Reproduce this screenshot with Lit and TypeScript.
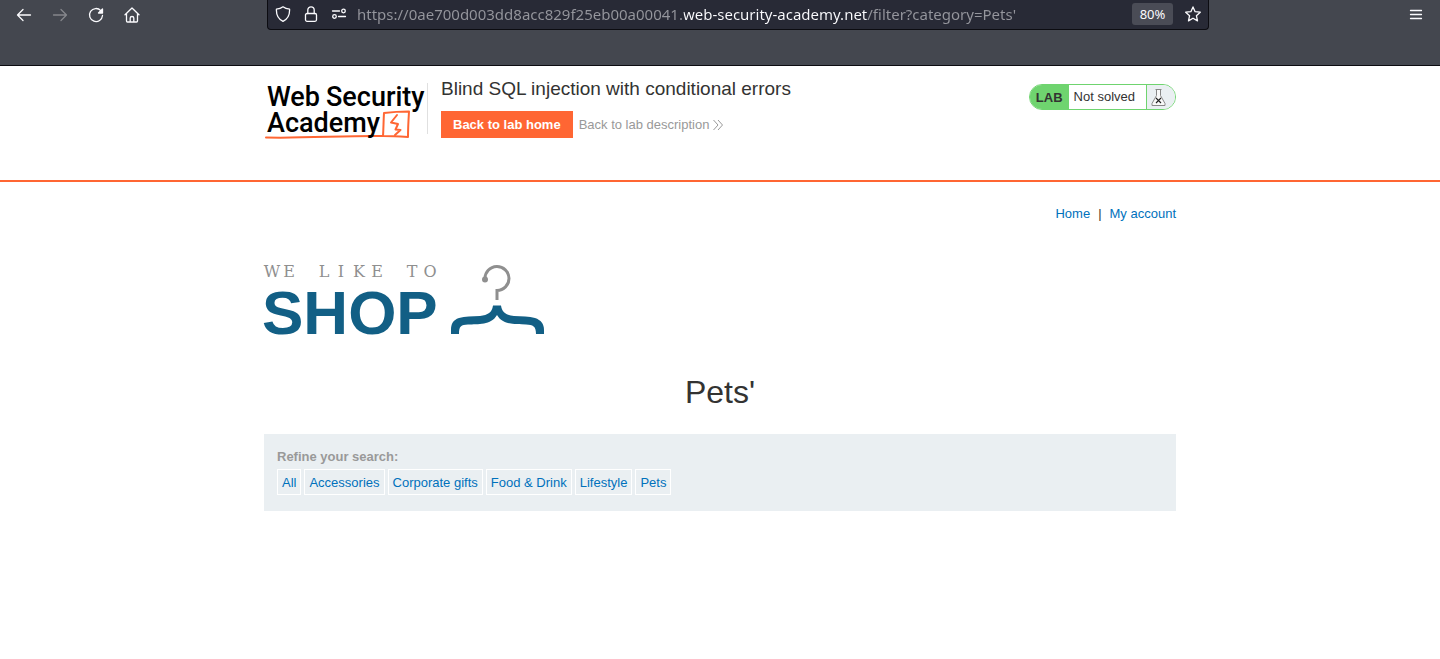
import { LitElement, html, css } from "lit";
import { customElement, property } from "lit/decorators.js";

@customElement("browser-bar")
class BrowserBar extends LitElement {
  @property() url = "";

  static styles = css`
    :host {
      display: block;
      box-sizing: border-box;
      min-height: 66px;
      background: #44474f;
      border-bottom: 1px solid #0c0c11;
      color: #fbfbfe;
      font-family: "Noto Sans", sans-serif;
    }
    .row {
      display: flex;
      align-items: flex-start;
      justify-content: space-between;
      height: 30px;
    }
    .nav {
      display: flex;
      gap: 4px;
      padding-left: 8px;
      width: 259px;
    }
    .end {
      display: flex;
      justify-content: flex-end;
      width: 223px;
      padding-right: 8px;
    }
    button {
      display: flex;
      align-items: center;
      justify-content: center;
      padding: 0;
      border: 0;
      background: none;
      color: inherit;
      font: inherit;
    }
    .tool {
      width: 32px;
      height: 29px;
    }
    .tool:disabled {
      color: #85878c;
    }
    .bar {
      box-sizing: border-box;
      flex: 1;
      min-width: 0;
      display: flex;
      align-items: center;
      gap: 12px;
      height: 30px;
      padding: 0 7px 1px;
      background: #282a36;
      border: 1px solid #0c0c11;
      border-top: 0;
      border-radius: 0 0 4px 4px;
    }
    svg {
      display: block;
      width: 16px;
      height: 16px;
      fill: none;
      stroke: currentColor;
      stroke-width: 1.3;
      stroke-linecap: round;
      stroke-linejoin: round;
    }
    .solid {
      fill: currentColor;
    }
    input {
      flex: 1;
      min-width: 0;
      height: 24px;
      padding: 0;
      margin-left: -2px;
      border: 0;
      outline: 0;
      font: 15px "Noto Sans", sans-serif;
      color: transparent;
      caret-color: #fbfbfe;
      background: linear-gradient(
        90deg,
        #95969d 327px,
        #fbfbfe 327px 510px,
        #95969d 510px
      );
      background-clip: text;
      -webkit-background-clip: text;
    }
    .zoom {
      width: 41px;
      height: 22px;
      border-radius: 3px;
      background: #4a4c56;
      font-size: 13px;
    }
  `;

  render() {
    return html`
      <div class="row">
        <div class="nav">
          <button class="tool" aria-label="Back">
            <svg viewBox="0 0 16 16"><path d="M1.500 8h13M7 2.500 1.500 8 7 13.500" /></svg>
          </button>
          <button class="tool" aria-label="Forward" disabled>
            <svg viewBox="0 0 16 16"><path d="M14.500 8h-13M9 2.500 14.500 8 9 13.500" /></svg>
          </button>
          <button class="tool" aria-label="Reload">
            <svg viewBox="0 0 16 16">
              <path d="M12.800 3.600A6.500 6.500 0 1 0 14.500 8.500" />
              <path class="solid" d="M14.500 2v4h-4z" />
            </svg>
          </button>
          <button class="tool" aria-label="Home">
            <svg viewBox="0 0 16 16">
              <path d="M1 7.800 8 1l7 6.800M2.500 6.500V14q0 1 1 1h9q1 0 1-1V6.500M6.200 15v-4q0-1.500 1.800-1.500T9.800 11v4" />
            </svg>
          </button>
        </div>
        <div class="bar">
          <svg viewBox="0 0 16 16"><path d="M8 .8C6 2.400 3.700 3 1.400 3.200 1.200 8.500 2.700 12.800 8 15.300c5.300-2.500 6.800-6.800 6.600-12.100C12.300 3 10 2.400 8 .8z" /></svg>
          <svg viewBox="0 0 16 16"><rect x="2.500" y="7.500" width="11" height="7.800" rx="1.500" /><path d="M4.800 7.500V4a3.200 3.200 0 0 1 6.400 0v3.500" /></svg>
          <svg viewBox="0 0 16 16">
            <circle cx="12.500" cy="5" r="1.800" /><circle cx="3.500" cy="10.500" r="1.800" />
            <path d="M1.500 5h7M7.500 10.500h7" />
          </svg>
          <input aria-label="Address" spellcheck="false" .value=${this.url} />
          <button class="zoom">80%</button>
          <svg viewBox="0 0 16 16"><path d="m8 .900 2.100 4.800 5.200.500-3.900 3.500 1.100 5.200L8 12.200l-4.500 2.700 1.100-5.200L.700 6.200l5.200-.5z" /></svg>
        </div>
        <div class="end">
          <button class="tool" aria-label="Menu">
            <svg viewBox="0 0 16 16"><path d="M2.500 3.500h11M2.500 7.500h11M2.500 11.500h11" /></svg>
          </button>
        </div>
      </div>
    `;
  }
}

@customElement("lab-header")
class LabHeader extends LitElement {
  static styles = css`
    :host {
      display: block;
      border-bottom: 2px solid #ff6633;
    }
    .inner {
      display: flex;
      align-items: flex-start;
      max-width: 912px;
      min-height: 102px;
      margin: 0 auto;
      padding-top: 12px;
    }
    .logo {
      display: block;
      margin-top: 4px;
      width: 163px;
      height: 60px;
      overflow: visible;
    }
    .logo text {
      font: 500 27px Roboto, sans-serif;
      fill: #000;
    }
    .logo path {
      fill: none;
      stroke: #ff6633;
      stroke-linejoin: round;
      stroke-linecap: round;
    }
    .rule {
      width: 1px;
      height: 51px;
      margin: 5px 13px 0 0;
      background: #e0e0e0;
    }
    .title {
      flex: 1;
    }
    h2 {
      margin: 0 0 12px;
      font-size: 19px;
      line-height: 21px;
      font-weight: 400;
    }
    .actions {
      display: flex;
      align-items: center;
      gap: 6px;
    }
    a {
      text-decoration: none;
    }
    .home {
      padding: 0 12px;
      line-height: 27px;
      background: #ff6633;
      color: #fff;
      font-weight: 700;
    }
    .desc {
      display: flex;
      align-items: center;
      gap: 4px;
      color: #999;
    }
    .desc svg {
      width: 10px;
      height: 12px;
      fill: none;
      stroke: #999;
    }
    .status {
      display: flex;
      box-sizing: border-box;
      height: 26px;
      margin-top: 6px;
      border: 1px solid #6fd46f;
      border-radius: 13px;
      overflow: hidden;
      line-height: 24px;
    }
    .lab {
      padding: 1px 6px 0;
      background: #6fd46f;
      font-weight: 700;
    }
    .state {
      padding: 0 11px 0 5px;
    }
    .flask {
      display: flex;
      align-items: center;
      padding: 0 9px 0 4px;
      border-left: 1px solid #6fd46f;
      background: #eaeff2;
    }
    .flask svg {
      width: 15px;
      height: 17px;
      fill: #f8f8f8;
      stroke: #888;
    }
    .flask .cross {
      stroke: #222;
      stroke-width: 1.1;
    }
  `;

  render() {
    return html`
      <div class="inner">
        <svg class="logo" viewBox="0 0 163 60" role="img" aria-label="Web Security Academy">
          <path stroke-width="2" d="M2 55.500C40 56.500 80 53.500 119 54" />
          <path stroke-width="2" d="M120 31c8-1 16-1.500 25-1.500-.5 8-1 17-1 25.500-8-.5-16-1-25-1 .5-7 .5-15 1-23z" />
          <path stroke-width="2" d="m133 33-6 7.500 7 1.500-2.500 5.500 5 .500-5.500 5" />
          <text x="3" y="24">Web</text>
          <text x="62" y="24">Security</text>
          <text x="3" y="50">Academy</text>
        </svg>
        <div class="rule"></div>
        <div class="title">
          <h2>Blind SQL injection with conditional errors</h2>
          <div class="actions">
            <a class="home" href="#">Back to lab home</a>
            <a class="desc" href="#">Back to lab description
              <svg viewBox="0 0 10 12"><path d="m.5 1 4.500 5-4.500 5M5 1l4.500 5L5 11" /></svg>
            </a>
          </div>
        </div>
        <div class="status">
          <span class="lab">LAB</span>
          <span class="state">Not solved</span>
          <span class="flask">
            <svg viewBox="0 0 15 17">
              <path d="M4.500.5h6M5.500.5v6L1 14.500v2h13v-2L9.500 6.500v-6" />
              <path class="cross" d="m5 9 5 5M10 9l-5 5" />
            </svg>
          </span>
        </div>
      </div>
    `;
  }
}

@customElement("app-root")
class AppRoot extends LitElement {
  static styles = css`
    :host {
      display: block;
      min-height: 100vh;
      background: #fff;
      color: #333332;
      font: 13px/16px "Liberation Sans", Arial, sans-serif;
    }
    main {
      max-width: 912px;
      margin: 0 auto;
      padding-top: 24px;
    }
    a {
      color: #0071bc;
      text-decoration: none;
    }
    .links {
      display: flex;
      justify-content: flex-end;
      gap: 8px;
    }
    .shop {
      display: block;
      width: 282px;
      height: 76px;
      margin-top: 40px;
      overflow: visible;
    }
    .small {
      font: 16px "DejaVu Serif", serif;
      text-anchor: middle;
      fill: #8f8f8f;
    }
    .big {
      font: 700 62px "Liberation Sans", Arial, sans-serif;
      fill: #125f85;
    }
    h1 {
      margin: 36px 0 24px;
      font-size: 32px;
      line-height: 36px;
      font-weight: 400;
      text-align: center;
    }
    .filters {
      padding: 15px 13px 16px;
      background: #eaeff2;
    }
    .caption {
      display: block;
      margin-bottom: 4px;
      color: #999;
      font-weight: 700;
    }
    .list {
      display: flex;
      flex-wrap: wrap;
      gap: 3px;
    }
    .list a {
      padding: 5px 4px 3px;
      border: 1px solid #fff;
    }
  `;

  private categories = [
    "All",
    "Accessories",
    "Corporate gifts",
    "Food & Drink",
    "Lifestyle",
    "Pets",
  ];

  render() {
    return html`
      <browser-bar
        url="https://0ae700d003dd8acc829f25eb00a00041.web-security-academy.net/filter?category=Pets'"
      ></browser-bar>
      <lab-header></lab-header>
      <main>
        <nav class="links">
          <a href="#">Home</a><span>|</span><a href="#">My account</a>
        </nav>
        <svg class="shop" viewBox="0 0 282 76" role="img" aria-label="We like to shop">
          <text class="small" y="15" x="8 25 42 60 77 95 113 131 148 166">WE LIKE TO</text>
          <text class="big" x="-2" y="72">SHOP</text>
          <g fill="none" stroke="#8f8f8f" stroke-width="3">
            <path d="M221 17a12 12 0 1 1 12 11.500V38" />
          </g>
          <circle cx="221" cy="17.500" r="3" fill="#8f8f8f" />
          <path
            fill="#125f85"
            d="M229 43.500h8c1 7 5 9.500 13 10.500 8 .5 15 0 21 2 6 2 9 6 9 12v4h-8c0-8-3-9-10-9.500-10-.5-23 1-29-9.500-6 10.500-19 9-29 9.500-7 .5-9 1.500-9 9.500h-8v-4c0-6 2-10 8-12 6-2 13-1.500 21-2 8-1 12-3.500 13-10.500z"
          />
        </svg>
        <h1>Pets'</h1>
        <section class="filters">
          <span class="caption">Refine your search:</span>
          <div class="list">
            ${this.categories.map((name) => html`<a href="#">${name}</a>`)}
          </div>
        </section>
      </main>
    `;
  }
}
